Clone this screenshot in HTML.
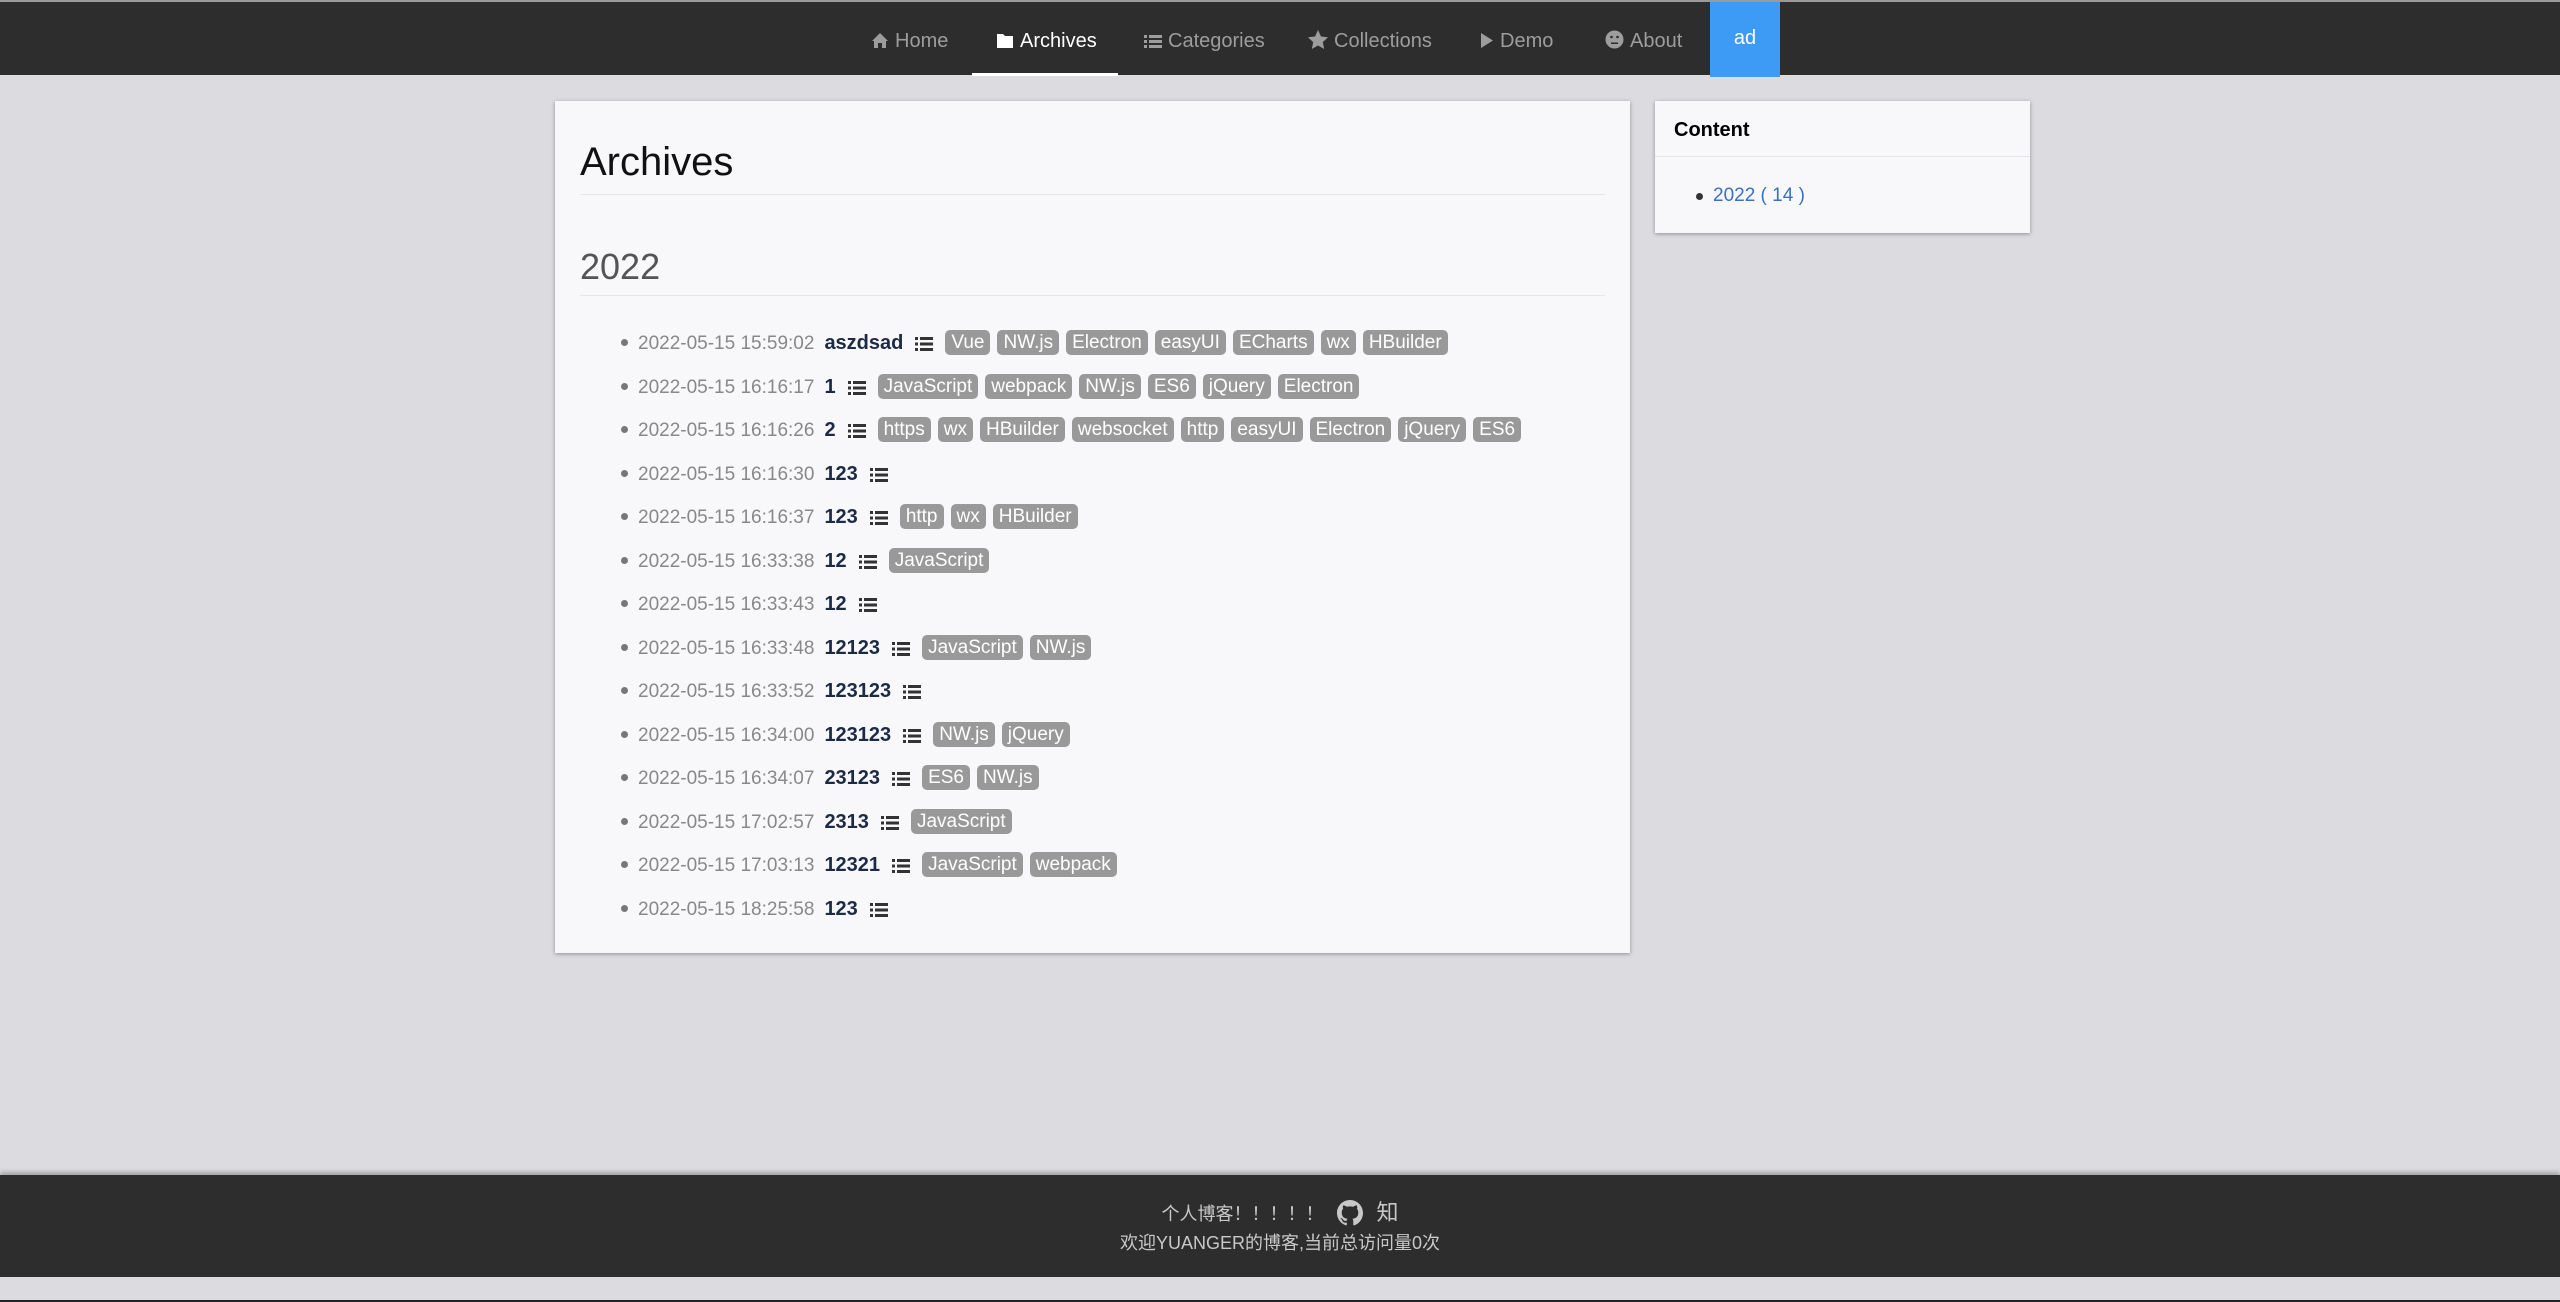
<!DOCTYPE html>
<html><head><meta charset="utf-8"><style>
*{margin:0;padding:0;box-sizing:border-box}
body{width:2560px;height:1302px;background:#dcdce0;font-family:"Liberation Sans","Noto Sans CJK SC",sans-serif;position:relative;overflow:hidden}
.nav{position:absolute;left:0;top:0;width:2560px;height:75px;background:#2d2d2d;border-top:2px solid #9a9a9a}
.ni{position:absolute;top:3px;height:73px;line-height:73px;color:#9d9d9d;font-size:20px;white-space:nowrap}
.ni svg{vertical-align:-2px;margin-right:6px}
.act{color:#fff}
.ul{position:absolute;left:972px;top:71px;width:146px;height:3px;background:#fff}
.ad{position:absolute;left:1710px;top:0;width:70px;height:75px;background:#3d9bf5;color:#fff;font-size:20px;text-align:center;line-height:73px}
.card{position:absolute;background:#f8f8fb;box-shadow:0 1px 4px rgba(0,0,0,.35)}
h1{position:absolute;left:25px;top:39px;font-size:40px;font-weight:normal;color:#111}
.hr{position:absolute;left:25px;right:25px;height:1px;background:#e6e6ea}
h2{position:absolute;left:25px;top:145px;font-size:36px;font-weight:normal;color:#555}
.row{position:absolute;left:65px;height:30px;line-height:30px;font-size:19px;white-space:nowrap}
.row:before{content:"";position:absolute;left:-17px;top:11px;width:7px;height:7px;border-radius:50%;background:#777}
.d{color:#888}
.t{color:#1c2a44;font-weight:bold;margin-left:10px;font-size:20px}
.row svg{margin:0 12px 0 12px;vertical-align:-2px}
.g{display:inline-block;background:#999;color:#fff;border-radius:5px;padding:0 6px;height:25px;line-height:25px;margin-right:7px;font-size:19px;vertical-align:1px}
.foot{position:absolute;left:0;top:1175px;width:2560px;height:102px;background:#2d2d2d;box-shadow:0 -3px 4px rgba(0,0,0,.25);color:#c8c8c8;text-align:center;font-size:18px}
</style></head><body>
<div class="nav">
<div class="ni" style="left:871px"><svg width="18" height="17" viewBox="0 0 18 17"><path d="M9 1L1 9h2v7h4v-5h4v5h4V9h2z" fill="#9d9d9d"/></svg>Home</div>
<div class="ni act" style="left:996px"><svg width="18" height="17" viewBox="0 0 18 17"><path d="M1 2h6l2 2h8v12H1z" fill="#fff"/></svg>Archives</div>
<div class="ni" style="left:1144px"><svg width="18" height="15" viewBox="0 0 18 15"><g fill="#9d9d9d"><rect x="0" y="1" width="3" height="3"/><rect x="5" y="1" width="13" height="3"/><rect x="0" y="6" width="3" height="3"/><rect x="5" y="6" width="13" height="3"/><rect x="0" y="11" width="3" height="3"/><rect x="5" y="11" width="13" height="3"/></g></svg>Categories</div>
<div class="ni" style="left:1308px"><svg width="20" height="19" viewBox="0 0 20 19"><path d="M10 0l3 6.5 7 .8-5.2 4.8 1.4 6.9L10 15.5 3.8 19l1.4-6.9L0 7.3l7-.8z" fill="#9d9d9d"/></svg>Collections</div>
<div class="ni" style="left:1480px"><svg width="14" height="17" viewBox="0 0 14 17"><path d="M1 1l12 7.5L1 16z" fill="#9d9d9d"/></svg>Demo</div>
<div class="ni" style="left:1605px"><svg width="19" height="19" viewBox="0 0 19 19"><circle cx="9.5" cy="9.5" r="9" fill="#9d9d9d"/><circle cx="6.5" cy="7" r="1.3" fill="#2d2d2d"/><circle cx="12.5" cy="7" r="1.3" fill="#2d2d2d"/><rect x="6" y="12.5" width="7" height="1.5" fill="#2d2d2d"/></svg>About</div>
<div class="ul"></div>
<div class="ad">ad</div>
</div>

<div class="card" style="left:555px;top:101px;width:1075px;height:852px">
<h1>Archives</h1>
<div class="hr" style="top:93px"></div>
<h2>2022</h2>
<div class="hr" style="top:194px"></div>
</div>
<div id="rows"></div>

<div class="card" style="left:1655px;top:101px;width:375px;height:132px">
<div style="position:absolute;left:19px;top:18px;font-size:20px;font-weight:bold;color:#000">Content</div>
<div class="hr" style="left:0;right:0;top:55px"></div>
<div style="position:absolute;left:58px;top:84px;font-size:19px;color:#3c6fc0"><span style="position:absolute;left:-17px;top:8px;width:7px;height:7px;border-radius:50%;background:#333"></span>2022 ( 14 )</div>
</div>

<div class="foot">
<div style="position:absolute;left:0;width:2560px;top:25px;line-height:26px">个人博客！！！！！ <svg width="26" height="26" viewBox="0 0 16 16" style="vertical-align:-6px;margin:0 14px 0 8px"><path fill="#c8c8c8" d="M8 0C3.58 0 0 3.58 0 8c0 3.540 2.29 6.53 5.47 7.59.4.07.55-.17.55-.38v-1.330c-2.230.48-2.700-1.070-2.700-1.070-.360-.920-.890-1.170-.890-1.170-.730-.5.060-.49.060-.49.8.060 1.230.830 1.230.830.720 1.220 1.870.870 2.330.660.070-.520.280-.870.5-1.070-1.780-.2-3.640-.890-3.640-3.950 0-.870.310-1.590.830-2.150-.080-.2-.360-1.020.080-2.120 0 0 .670-.210 2.2.820a7.6 7.6 0 014 0c1.530-1.040 2.2-.820 2.2-.820.440 1.1.160 1.920.080 2.120.510.560.820 1.270.820 2.150 0 3.070-1.870 3.750-3.650 3.950.290.250.540.730.540 1.480v2.2c0 .210.150.460.550.380A8 8 0 0016 8c0-4.420-3.580-8-8-8z"/></svg><span style="font-size:22px">知</span></div>
<div style="position:absolute;left:0;width:2560px;top:55px;line-height:26px">欢迎YUANGER的博客,当前总访问量0次</div>
</div>
<div style="position:absolute;left:0;top:1300px;width:2560px;height:2px;background:#222"></div>

<script>
var data=[["15:59:02","aszdsad","Vue NW.js Electron easyUI ECharts wx HBuilder"],["16:16:17","1","JavaScript webpack NW.js ES6 jQuery Electron"],["16:16:26","2","https wx HBuilder websocket http easyUI Electron jQuery ES6"],["16:16:30","123",""],["16:16:37","123","http wx HBuilder"],["16:33:38","12","JavaScript"],["16:33:43","12",""],["16:33:48","12123","JavaScript NW.js"],["16:33:52","123123",""],["16:34:00","123123","NW.js jQuery"],["16:34:07","23123","ES6 NW.js"],["17:02:57","2313","JavaScript"],["17:03:13","12321","JavaScript webpack"],["18:25:58","123",""]];
var ic='<svg width="18" height="14" viewBox="0 0 18 14"><g fill="#333"><rect x="0" y="0" width="3" height="3"/><rect x="5" y="0" width="13" height="3"/><rect x="0" y="5.5" width="3" height="3"/><rect x="5" y="5.5" width="13" height="3"/><rect x="0" y="11" width="3" height="3"/><rect x="5" y="11" width="13" height="3"/></g></svg>';
var h='';data.forEach(function(r,i){var tags=r[2]?r[2].split(' ').map(function(t){return '<span class="g">'+t+'</span>'}).join(''):'';
h+='<div class="row" style="left:638px;top:'+(328+i*43.5)+'px"><span class="d">2022-05-15 '+r[0]+'</span><span class="t">'+r[1]+'</span>'+ic+tags+'</div>';});
document.getElementById('rows').innerHTML=h;
</script>
</body></html>
